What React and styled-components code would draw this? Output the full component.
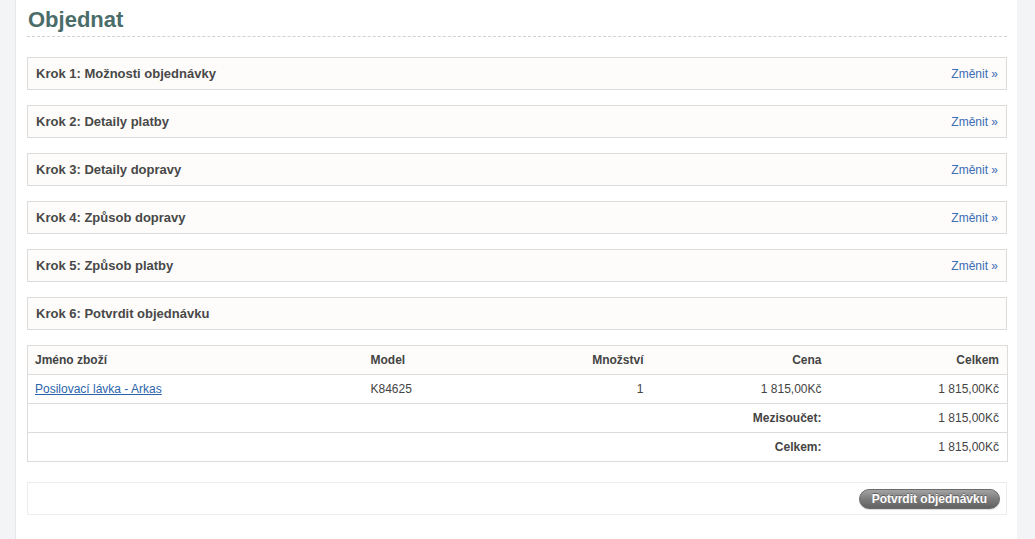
import React from 'react';
import styled, { createGlobalStyle } from 'styled-components';

const GlobalStyle = createGlobalStyle`
  html, body {
    margin: 0;
    padding: 0;
    background: #f3f4f6;
    font-family: "Liberation Sans", Arial, sans-serif;
  }
`;

const Page = styled.div`
  margin-left: 15px;
  width: 1002px;
  min-height: 100vh;
  background: #fff;
  border-left: 1px solid #e6e7e9;
  box-sizing: border-box;
  padding: 0 10px 20px 11px;
`;

const Title = styled.h1`
  margin: 0;
  padding: 8px 0 4px 1px;
  font-size: 22px;
  font-weight: bold;
  color: #4a6d6a;
  border-bottom: 1px dashed #cfd3d3;
  line-height: 24px;
`;

const Steps = styled.div`
  display: flex;
  flex-direction: column;
  gap: 15px;
  margin-top: 20px;
`;

const Step = styled.div`
  display: flex;
  align-items: center;
  justify-content: space-between;
  height: 33px;
  box-sizing: border-box;
  padding: 0 8px 0 8px;
  background: #fdfcfa;
  border: 1px solid #dcdcdc;
`;

const StepTitle = styled.span`
  font-size: 13px;
  font-weight: bold;
  color: #484848;
`;

const ChangeLink = styled.a`
  font-size: 12px;
  color: #3b6cb4;
  text-decoration: none;
  cursor: pointer;
`;

const Table = styled.table`
  width: 980px;
  box-sizing: border-box;
  margin-top: 15px;
  border-collapse: collapse;
  table-layout: fixed;
  border: 1px solid #dcdcdc;
  font-size: 12px;
  color: #444;
`;

const Th = styled.th`
  width: ${({ w }) => w}px;
  box-sizing: border-box;
  height: 29px;
  padding: 0 8px 0 7px;
  background: #fdfcfa;
  font-weight: bold;
  text-align: ${({ align }) => align || 'left'};
  border-bottom: 1px solid #dcdcdc;
`;

const Td = styled.td`
  height: 28px;
  padding: 0 8px 0 7px;
  text-align: ${({ align }) => align || 'left'};
  font-weight: ${({ bold }) => (bold ? 'bold' : 'normal')};
  border-bottom: 1px solid #dcdcdc;
  white-space: nowrap;
`;

const ProductLink = styled.a`
  color: #2b64ab;
  text-decoration: underline;
  cursor: pointer;
`;

const Buttons = styled.div`
  display: flex;
  justify-content: flex-end;
  align-items: center;
  height: 33px;
  box-sizing: border-box;
  margin-top: 20px;
  padding: 0 6px;
  border: 1px solid #ececec;
`;

const ConfirmButton = styled.button`
  height: 20px;
  padding: 0 12px;
  border: 1px solid #6a6a6a;
  border-radius: 10px;
  background: linear-gradient(#a3a3a3, #7c7c7c 50%, #616161);
  color: #fff;
  font-family: "Liberation Sans", Arial, sans-serif;
  font-size: 12px;
  font-weight: bold;
  text-shadow: 0 -1px 0 rgba(0, 0, 0, 0.35);
  box-shadow: 0 1px 1px rgba(0, 0, 0, 0.15);
  cursor: pointer;
`;

const steps = [
  { title: 'Krok 1: Možnosti objednávky', done: true },
  { title: 'Krok 2: Detaily platby', done: true },
  { title: 'Krok 3: Detaily dopravy', done: true },
  { title: 'Krok 4: Způsob dopravy', done: true },
  { title: 'Krok 5: Způsob platby', done: true },
  { title: 'Krok 6: Potvrdit objednávku', done: false },
];

const totals = [
  { label: 'Mezisoučet:', value: '1 815,00Kč' },
  { label: 'Celkem:', value: '1 815,00Kč' },
];

const App = () => (
  <>
    <GlobalStyle />
    <Page>
      <Title>Objednat</Title>
      <Steps>
        {steps.map((s) => (
          <Step key={s.title}>
            <StepTitle>{s.title}</StepTitle>
            {s.done && <ChangeLink>Změnit »</ChangeLink>}
          </Step>
        ))}
      </Steps>
      <Table>
        <thead>
          <tr>
            <Th w={336}>Jméno zboží</Th>
            <Th w={144}>Model</Th>
            <Th w={144} align="right">Množství</Th>
            <Th w={178} align="right">Cena</Th>
            <Th w={178} align="right">Celkem</Th>
          </tr>
        </thead>
        <tbody>
          <tr>
            <Td><ProductLink>Posilovací lávka - Arkas</ProductLink></Td>
            <Td>K84625</Td>
            <Td align="right">1</Td>
            <Td align="right">1 815,00Kč</Td>
            <Td align="right">1 815,00Kč</Td>
          </tr>
          {totals.map((t) => (
            <tr key={t.label}>
              <Td colSpan={4} align="right" bold>{t.label}</Td>
              <Td align="right">{t.value}</Td>
            </tr>
          ))}
        </tbody>
      </Table>
      <Buttons>
        <ConfirmButton>Potvrdit objednávku</ConfirmButton>
      </Buttons>
    </Page>
  </>
);

export default App;
